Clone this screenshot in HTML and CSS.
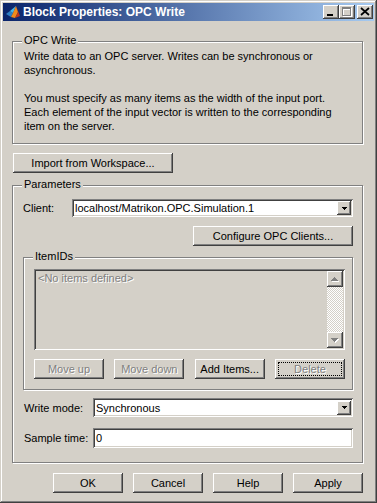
FILE: index.html
```html
<!DOCTYPE html>
<html lang="en">
<head>
  <meta charset="UTF-8">
  <title>Block Properties: OPC Write</title>
  <link rel="stylesheet" href="styles.css">
</head>
<body>

  <div class="window">

    <!-- Title bar -->
    <div class="titlebar">
      <svg class="app-icon" width="16" height="16" viewBox="0 0 16 16">
        <path d="M1 10 L5 7 L8 9 L6 13 Z" fill="#2f7fc4"/>
        <path d="M5 7 L8 9 L11 2 Z" fill="#46b8e8"/>
        <path d="M8 9 L11 2 L13 8 L10 14 L6 13 Z" fill="#f08a1c"/>
        <path d="M11 2 L15 12 L10 14 L13 8 Z" fill="#c2361a"/>
      </svg>
      <span class="title">Block Properties: OPC Write</span>
      <div class="caption-buttons">
        <span class="cap-btn">
          <svg width="16" height="14" viewBox="0 0 16 14"><rect x="4" y="9" width="6" height="2" fill="#000"/></svg>
        </span>
        <span class="cap-btn">
          <svg width="16" height="14" viewBox="0 0 16 14">
            <path d="M4 3h9v9H4z M5 5h7v6H5z" fill="#fff" fill-rule="evenodd"/>
            <path d="M3 2h9v9H3z M4 4h7v6H4z" fill="#808080" fill-rule="evenodd"/>
          </svg>
        </span>
        <span class="cap-btn close">
          <svg width="16" height="14" viewBox="0 0 16 14"><path d="M4 3l8 7M12 3l-8 7" stroke="#000" stroke-width="1.7"/></svg>
        </span>
      </div>
    </div>

    <div class="client">

      <!-- Description -->
      <div class="group desc">
        <span class="group-label">OPC Write</span>
        <p>Write data to an OPC server. Writes can be synchronous or<br>asynchronous.</p>
        <p>You must specify as many items as the width of the input port.<br>Each element of the input vector is written to the corresponding<br>item on the server.</p>
      </div>

      <button class="btn import">Import from Workspace...</button>

      <!-- Parameters -->
      <div class="group params">
        <span class="group-label">Parameters</span>

        <div class="field-row client-row">
          <label>Client:</label>
          <div class="combo">
            <span class="combo-value">localhost/Matrikon.OPC.Simulation.1</span>
            <span class="drop-btn"><svg width="5" height="3" viewBox="0 0 5 3"><path d="M0 0h5v1H4v1H3v1H2V2H1V1H0z" fill="#000"/></svg></span>
          </div>
        </div>

        <div class="right-row">
          <button class="btn configure">Configure OPC Clients...</button>
        </div>

        <div class="group items">
          <span class="group-label">ItemIDs</span>
          <div class="listbox">
            <span class="placeholder">&lt;No items defined&gt;</span>
            <div class="scrollbar">
              <span class="sb-btn">
                <svg width="8" height="5" viewBox="0 0 8 5">
                  <path d="M4 1h1v1h1v1h1v1h1v1H1V4h1V3h1V2h1z" fill="#fff"/>
                  <path d="M3 0h1v1h1v1h1v1h1v1H0V3h1V2h1V1h1z" fill="#808080"/>
                </svg>
              </span>
              <span class="sb-track"></span>
              <span class="sb-btn">
                <svg width="8" height="5" viewBox="0 0 8 5">
                  <path d="M1 1h7v1H7v1H6v1H5v1H4V4H3V3H2V2H1z" fill="#fff"/>
                  <path d="M0 0h7v1H6v1H5v1H4v1H3V3H2V2H1V1H0z" fill="#808080"/>
                </svg>
              </span>
            </div>
          </div>
          <div class="item-buttons">
            <button class="btn disabled">Move up</button>
            <button class="btn disabled">Move down</button>
            <button class="btn">Add Items...</button>
            <button class="btn disabled focused">Delete</button>
          </div>
        </div>

        <div class="field-row mode-row">
          <label>Write mode:</label>
          <div class="combo">
            <span class="combo-value">Synchronous</span>
            <span class="drop-btn"><svg width="5" height="3" viewBox="0 0 5 3"><path d="M0 0h5v1H4v1H3v1H2V2H1V1H0z" fill="#000"/></svg></span>
          </div>
        </div>

        <div class="field-row sample-row">
          <label>Sample time:</label>
          <div class="edit">0</div>
        </div>
      </div>

      <!-- Dialog buttons -->
      <div class="actions">
        <button class="btn">OK</button>
        <button class="btn">Cancel</button>
        <button class="btn">Help</button>
        <button class="btn">Apply</button>
      </div>

    </div>
  </div>

</body>
</html>
```

FILE: styles.css
```css
* {
  box-sizing: border-box;
}

html, body {
  margin: 0;
  padding: 0;
}

body {
  background: #d4d0c8;
  font-family: "Liberation Sans", Arial, sans-serif;
  font-size: 11px;
  color: #000;
}

.window {
  width: 377px;
  height: 503px;
  padding: 3px;
  background: #d4d0c8;
  box-shadow: inset -1px -1px #404040, inset 1px 1px #d4d0c8, inset -2px -2px #808080, inset 2px 2px #fff;
  display: flex;
  flex-direction: column;
}

/* Title bar */
.titlebar {
  height: 18px;
  display: flex;
  align-items: center;
  padding: 0 1px 0 2px;
  background: linear-gradient(to right, #0a246a, #a6caf0);
  color: #fff;
}

.app-icon {
  margin-right: 2px;
}

.title {
  flex: 1;
  font-size: 12px;
  font-weight: bold;
}

.caption-buttons {
  display: flex;
}

.cap-btn {
  width: 16px;
  height: 14px;
  background: #d4d0c8;
  box-shadow: inset -1px -1px #404040, inset 1px 1px #fff, inset -2px -2px #808080;
}

.cap-btn svg {
  display: block;
}

.cap-btn.close {
  margin-left: 2px;
}

/* Client area */
.client {
  flex: 1;
  padding: 0 11px 0 9px;
  display: flex;
  flex-direction: column;
}

.group {
  position: relative;
  border: 1px solid #808080;
  box-shadow: inset 1px 1px #fff, 1px 1px #fff;
}

.group-label {
  position: absolute;
  top: -8px;
  left: 9px;
  padding: 0 2px;
  line-height: 13px;
  background: #d4d0c8;
}

.desc {
  margin-top: 20px;
  padding: 7px 9px 10px 11px;
}

.desc p {
  margin: 0;
  line-height: 14px;
}

.desc p + p {
  margin-top: 14px;
}

/* Buttons */
.btn {
  height: 20px;
  padding: 0;
  border: none;
  background: #d4d0c8;
  font-family: inherit;
  font-size: 11px;
  color: #000;
  box-shadow: inset -1px -1px #404040, inset 1px 1px #fff, inset -2px -2px #808080;
}

.btn.disabled {
  color: #808080;
  text-shadow: 1px 1px #fff;
}

.btn.focused {
  outline: 1px dotted #000;
  outline-offset: -4px;
}

.import {
  align-self: flex-start;
  width: 160px;
  margin: 9px 0 0 1px;
}

/* Parameters */
.params {
  margin-top: 12px;
  padding: 13px 9px 14px 10px;
}

.field-row {
  display: flex;
  align-items: center;
}

.field-row label {
  flex: none;
}

.client-row label {
  width: 49px;
}

.mode-row label,
.sample-row label {
  width: 70px;
  padding-left: 1px;
}

.combo,
.edit,
.listbox {
  background: #fff;
  box-shadow: inset 1px 1px #808080, inset -1px -1px #fff, inset 2px 2px #404040, inset -2px -2px #d4d0c8;
}

.combo {
  flex: 1;
  height: 18px;
  display: flex;
  align-items: center;
  padding: 2px;
}

.combo-value {
  flex: 1;
  padding-left: 1px;
}

.drop-btn {
  width: 14px;
  height: 14px;
  display: flex;
  align-items: center;
  justify-content: center;
  background: #d4d0c8;
  box-shadow: inset -1px -1px #404040, inset 1px 1px #fff, inset -2px -2px #808080;
}

.drop-btn svg {
  display: block;
}

.right-row {
  display: flex;
  justify-content: flex-end;
  margin-top: 9px;
}

.configure {
  width: 160px;
}

/* ItemIDs */
.items {
  margin-top: 11px;
  padding: 11px 7px 10px 10px;
}

.listbox {
  height: 81px;
  display: flex;
  padding: 2px;
  background: #d4d0c8;
}

.placeholder {
  flex: 1;
  padding: 1px 0 0 2px;
  line-height: 13px;
  color: #808080;
  text-shadow: 1px 1px #fff;
}

.scrollbar {
  width: 16px;
  display: flex;
  flex-direction: column;
}

.sb-btn {
  height: 16px;
  display: flex;
  align-items: center;
  justify-content: center;
  background: #d4d0c8;
  box-shadow: inset -1px -1px #404040, inset 1px 1px #fff, inset -2px -2px #808080;
}

.sb-btn svg {
  display: block;
}

.sb-track {
  flex: 1;
  background: repeating-conic-gradient(#fff 0 25%, #d4d0c8 0 50%) 0 0 / 2px 2px;
}

.item-buttons {
  display: flex;
  justify-content: space-between;
  margin-top: 9px;
}

.item-buttons .btn {
  width: 70px;
}

.mode-row {
  margin-top: 8px;
}

.mode-row .combo {
  height: 19px;
}

.sample-row {
  margin-top: 11px;
}

.edit {
  flex: 1;
  height: 20px;
  padding: 3px 3px 0;
  line-height: 14px;
}

/* Dialog buttons */
.actions {
  display: flex;
  justify-content: flex-end;
  gap: 10px;
  margin-top: 10px;
}

.actions .btn {
  width: 70px;
}
```
